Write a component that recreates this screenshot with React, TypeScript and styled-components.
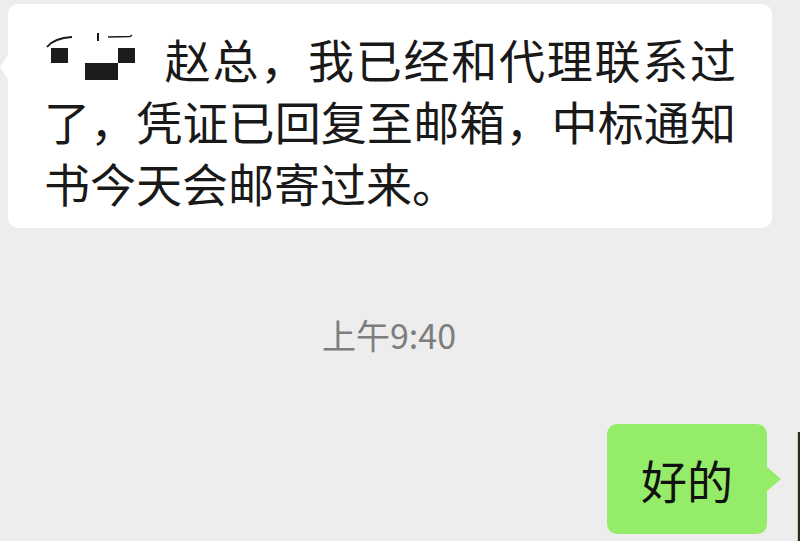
import React from "react";
import styled, { createGlobalStyle } from "styled-components";

const Global = createGlobalStyle`
  html, body {
    margin: 0;
    padding: 0;
    background: #ededed;
    overflow: hidden;
  }
  body {
    font-family: "Noto Sans CJK SC", "Noto Sans", sans-serif;
  }
`;

const Page = styled.div`
  width: 800px;
  height: 541px;
  display: flex;
  flex-direction: column;
  padding-top: 4px;
  box-sizing: border-box;
  overflow: hidden;
`;

const IncomingRow = styled.div`
  display: flex;
  padding: 0 28px 0 8px;
`;

const IncomingBubble = styled.div`
  position: relative;
  flex: 1;
  background: #ffffff;
  border-radius: 10px;
  padding: 23px 36px 15px 36px;
  font-size: 46px;
  line-height: 62px;
  color: #191919;
  text-align: justify;
  &::before {
    content: "";
    position: absolute;
    left: -8px;
    top: 51px;
    border-top: 12px solid transparent;
    border-bottom: 12px solid transparent;
    border-right: 8px solid #ffffff;
  }
`;

const Censor = styled.svg`
  display: inline-block;
  vertical-align: top;
  width: 119px;
  height: 62px;
`;

const TimeRow = styled.div`
  margin-top: 87px;
  padding-right: 22px;
  text-align: center;
  font-size: 34px;
  line-height: 40px;
  color: #7d7d7d;
`;

const OutgoingRow = styled.div`
  margin-top: 69px;
  display: flex;
  justify-content: flex-end;
  align-items: flex-start;
  gap: 30px;
`;

const OutgoingBubble = styled.div`
  position: relative;
  background: #95ec69;
  border-radius: 10px;
  padding: 24px 34px;
  font-size: 46px;
  line-height: 62px;
  color: #111111;
  &::after {
    content: "";
    position: absolute;
    right: -14px;
    top: 43px;
    border-top: 12px solid transparent;
    border-bottom: 12px solid transparent;
    border-left: 14px solid #95ec69;
  }
`;

const Avatar = styled.div`
  margin-top: 8px;
  width: 2px;
  height: 120px;
  flex-shrink: 0;
  background: #2a2a26;
  border-left: 1px solid #d9cfa6;
`;

export default function App() {
  return (
    <>
      <Global />
      <Page>
        <IncomingRow>
          <IncomingBubble>
            <Censor viewBox="0 0 119 62">
              <path d="M3 20 Q10 11 28 10" stroke="#1a1a1a" strokeWidth="2" fill="none" />
              <rect x="53" y="6" width="2" height="8" fill="#1a1a1a" />
              <path d="M64 10 L86 9.5 L88 8" stroke="#1a1a1a" strokeWidth="1.5" fill="none" />
              <rect x="7" y="21" width="17" height="15" fill="#1c1c1c" />
              <rect x="41" y="36" width="33" height="17" fill="#1c1c1c" />
              <rect x="74" y="21" width="17" height="15" fill="#1c1c1c" />
            </Censor>
            赵总，我已经和代理联系过了，凭证已回复至邮箱，中标通知书今天会邮寄过来。
          </IncomingBubble>
        </IncomingRow>
        <TimeRow>上午9:40</TimeRow>
        <OutgoingRow>
          <OutgoingBubble>好的</OutgoingBubble>
          <Avatar />
        </OutgoingRow>
      </Page>
    </>
  );
}
